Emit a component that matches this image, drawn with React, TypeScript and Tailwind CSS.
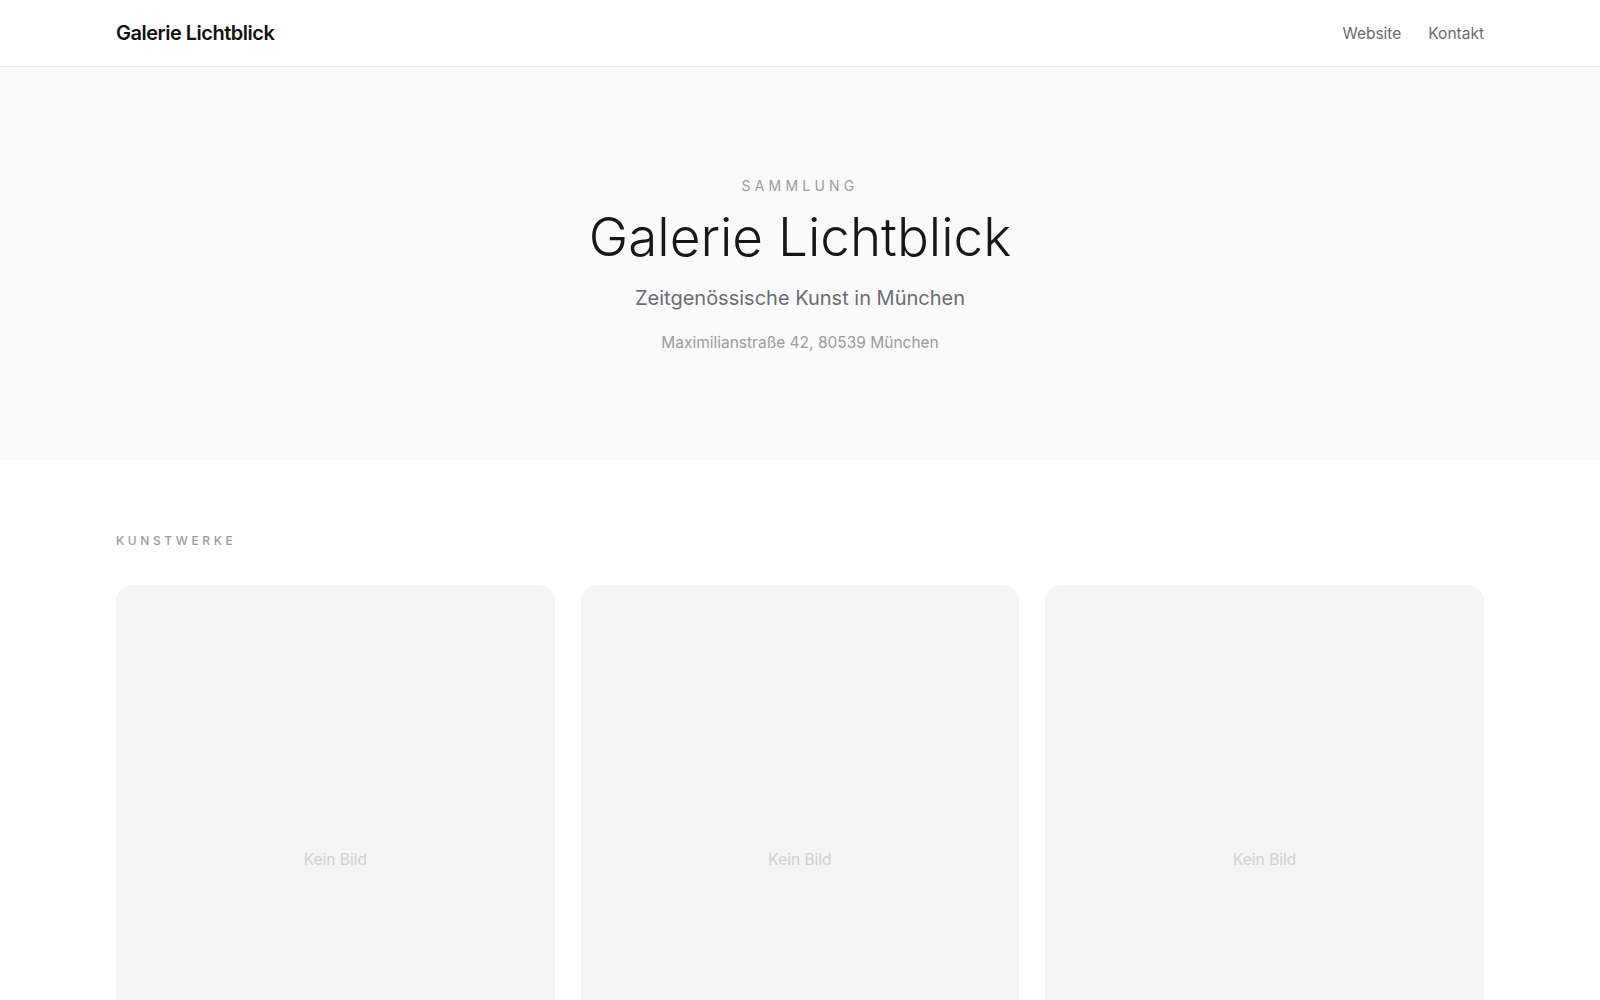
import React from "react";

const font = { fontFamily: "Inter, 'Noto Sans', sans-serif" };

export default function App() {
  const cards = [1, 2, 3];
  return (
    <div className="min-h-screen bg-white text-[#171717]" style={font}>
      <header className="border-b border-[#e5e5e5] bg-white">
        <div className="mx-auto flex h-[66px] max-w-[1400px] items-center justify-between px-4">
          <div className="text-xl font-semibold tracking-tight text-[#111111]">Galerie Lichtblick</div>
          <nav className="flex items-center gap-[27px] pt-[2px] text-[15.5px] text-[#6b6b6b]">
            <a href="#">Website</a>
            <a href="#">Kontakt</a>
          </nav>
        </div>
      </header>

      <section className="bg-[#fafafa] pt-[109px] pb-[105px] text-center">
        <div className="mx-auto max-w-[1400px] px-4">
          <p className="text-sm leading-5 uppercase tracking-[0.3em] text-[#9a9aa0]">Sammlung</p>
          <h1 className="mt-[11px] text-[53px] leading-[60px] font-light text-[#171717]">Galerie Lichtblick</h1>
          <p className="mt-[17px] text-xl leading-7 text-[#6b6b73]">Zeitgenössische Kunst in München</p>
          <p className="mt-[19px] text-[15.5px] leading-6 text-[#9a9aa0]">Maximilianstraße 42, 80539 München</p>
        </div>
      </section>

      <main className="mx-auto max-w-[1400px] px-4 pt-[73px]">
        <h2 className="text-xs leading-4 font-medium uppercase tracking-[0.3em] text-[#9a9aa0]">Kunstwerke</h2>
        <div className="mt-9 grid grid-cols-3 gap-[26px]">
          {cards.map((c) => (
            <div key={c} className="flex aspect-[4/5] items-center justify-center rounded-2xl bg-[#f5f5f5]">
              <span className="text-[15.5px] text-[#d0d0d4]">Kein Bild</span>
            </div>
          ))}
        </div>
      </main>
    </div>
  );
}
